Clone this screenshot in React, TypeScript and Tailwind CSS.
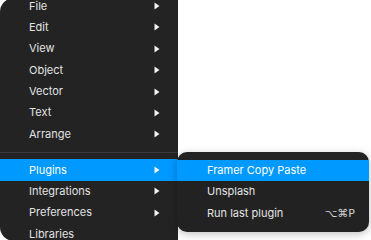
import React from "react"

type Item = { label: string; sub?: boolean; active?: boolean }

const mainItems: Item[] = [
  { label: "File", sub: true },
  { label: "Edit", sub: true },
  { label: "View", sub: true },
  { label: "Object", sub: true },
  { label: "Vector", sub: true },
  { label: "Text", sub: true },
  { label: "Arrange", sub: true },
]

const lowerItems: Item[] = [
  { label: "Plugins", sub: true, active: true },
  { label: "Integrations", sub: true },
  { label: "Preferences", sub: true },
  { label: "Libraries" },
]

const Arrow = () => (
  <svg width="6" height="8" viewBox="0 0 6 8" className="shrink-0">
    <path d="M0.5 0.5 L5.5 4 L0.5 7.5 Z" fill="#f2f2f2" />
  </svg>
)

const Row = ({ item }: { item: Item }) => (
  <div
    className={
      item.active
        ? "flex h-[21.4px] shrink-0 items-center justify-between bg-[#0099ff] pl-[29px] pr-[18px] text-white"
        : "flex h-[21.4px] shrink-0 items-center justify-between pl-[29px] pr-[18px] text-[#e2e2e2]"
    }
  >
    <span>{item.label}</span>
    {item.sub && <Arrow />}
  </div>
)

const App = () => {
  return (
    <div
      className="relative h-[240px] w-[371px] overflow-hidden bg-white text-[11px] leading-none"
      style={{ fontFamily: "Inter, 'DejaVu Sans', sans-serif" }}
    >
      <div className="-mt-[2px] h-[243px] w-[178px] overflow-hidden rounded-l-[14px] bg-[#232323]">
        <div className="-mt-[2.7px]">
          {mainItems.map((it) => (
            <Row key={it.label} item={it} />
          ))}
        </div>
        <div className="flex h-[14.3px] items-center">
          <div className="h-px w-full bg-[#3a3a3a]" />
        </div>
        <div>
          {lowerItems.map((it) => (
            <Row key={it.label} item={it} />
          ))}
        </div>
      </div>

      <div className="absolute left-[177px] top-[152px] w-[192px] rounded-[10px] bg-[#222222] py-[8px] shadow-[0_2px_8px_rgba(0,0,0,0.25)]">
        <div className="flex h-[21.3px] items-center bg-[#0099ff] pl-[30px] pr-[14px] text-white">
          Framer Copy Paste
        </div>
        <div className="flex h-[21.3px] items-center pl-[30px] pr-[14px] text-[#e2e2e2]">
          Unsplash
        </div>
        <div className="flex h-[21.3px] items-center justify-between pl-[30px] pr-[14px] text-[#e2e2e2]">
          <span>Run last plugin</span>
          <span className="text-[#d0d0d0]" style={{ fontFamily: "'DejaVu Sans', Inter, sans-serif" }}>
            ⌥⌘P
          </span>
        </div>
      </div>
    </div>
  )
}

export default App
